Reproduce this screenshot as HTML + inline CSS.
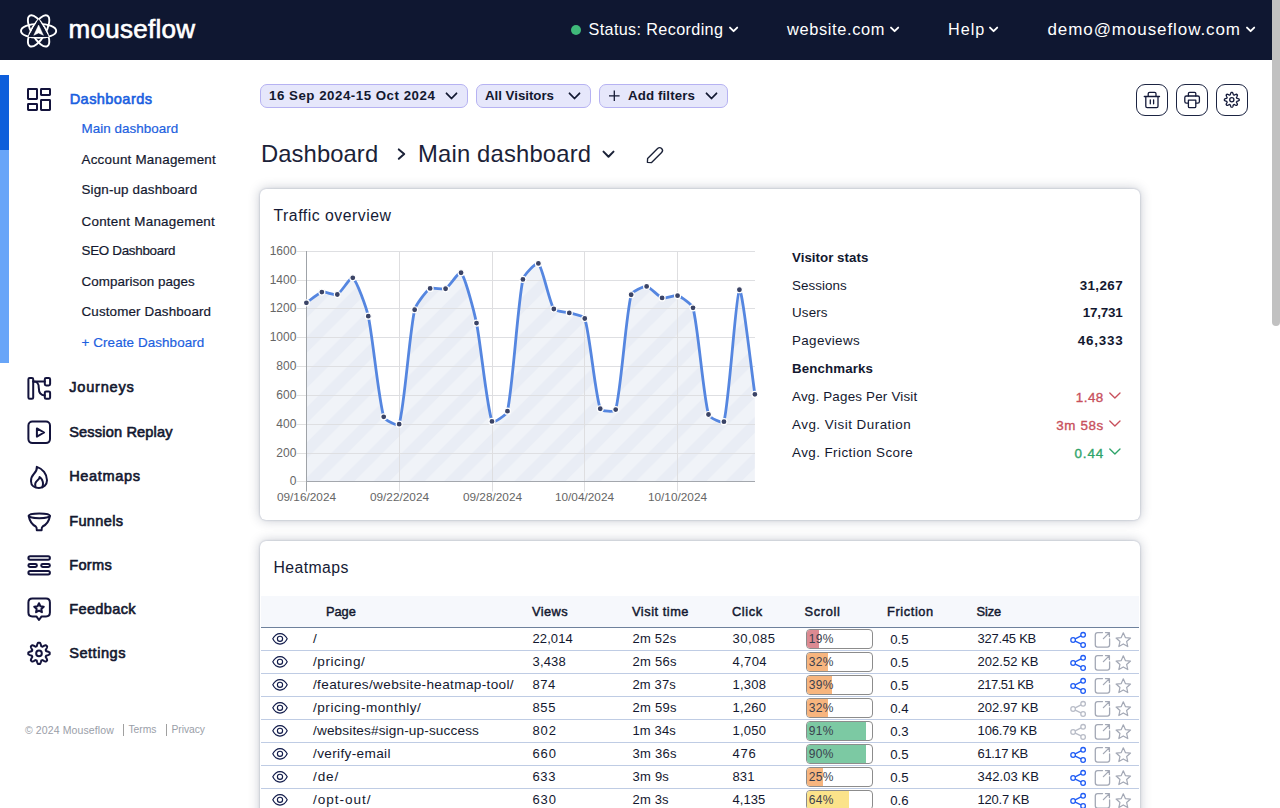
<!DOCTYPE html>
<html><head><meta charset="utf-8"><title>Mouseflow Dashboard</title>
<style>
html,body{margin:0;padding:0;width:1280px;height:808px;overflow:hidden;background:#fff;}
body{position:relative;font-family:"Liberation Sans", sans-serif;}
.t{position:absolute;white-space:nowrap;}
</style></head><body>
<div style="position:absolute;left:0px;top:0px;width:1272px;height:60px;background:#0f1731"></div>
<div style="position:absolute;left:1272px;top:0px;width:8px;height:326px;background:#c1c1c1;border-radius:0 0 4px 4px"></div>
<div style="position:absolute;left:1272px;top:326px;width:8px;height:482px;background:#ffffff"></div>
<div class="t" style="left:68.6px;top:15.62px;font-size:26px;line-height:26px;font-weight:400;color:#ffffff;letter-spacing:0.26px;-webkit-text-stroke:0.65px #fff">mouseflow</div>
<div style="position:absolute;left:571px;top:24.5px;width:10px;height:10px;background:#3fb97a;border-radius:50%"></div>
<div class="t" style="left:588.5px;top:21.45px;font-size:16.2px;line-height:16.2px;font-weight:400;color:#ffffff;letter-spacing:0.363px;">Status: Recording</div>
<div class="t" style="left:787px;top:21.29px;font-size:16.4px;line-height:16.4px;font-weight:400;color:#ffffff;letter-spacing:0.639px;">website.com</div>
<div class="t" style="left:948px;top:21.45px;font-size:16.2px;line-height:16.2px;font-weight:400;color:#ffffff;letter-spacing:0.992px;">Help</div>
<div class="t" style="left:1047.5px;top:20.79px;font-size:17px;line-height:17px;font-weight:400;color:#ffffff;letter-spacing:0.916px;">demo@mouseflow.com</div>
<div style="position:absolute;left:0px;top:75px;width:9px;height:75px;background:#0e5fdb"></div>
<div style="position:absolute;left:0px;top:150px;width:9px;height:213px;background:#68a5f8"></div>
<div class="t" style="left:69.7px;top:91.68px;font-size:14.6px;line-height:14.6px;font-weight:400;color:#1a5fe0;letter-spacing:0.397px;-webkit-text-stroke:0.6px #1a5fe0">Dashboards</div>
<div class="t" style="left:81.5px;top:122.38px;font-size:13.4px;line-height:13.4px;font-weight:400;color:#1d5fe0;letter-spacing:0.059px;-webkit-text-stroke:0.2px #1d5fe0">Main dashboard</div>
<div class="t" style="left:81.5px;top:152.78px;font-size:13.4px;line-height:13.4px;font-weight:400;color:#13182f;letter-spacing:0.232px;-webkit-text-stroke:0.2px #13182f">Account Management</div>
<div class="t" style="left:81.5px;top:183.18px;font-size:13.4px;line-height:13.4px;font-weight:400;color:#13182f;letter-spacing:0.152px;-webkit-text-stroke:0.2px #13182f">Sign-up dashboard</div>
<div class="t" style="left:81.5px;top:214.78px;font-size:13.4px;line-height:13.4px;font-weight:400;color:#13182f;letter-spacing:0.266px;-webkit-text-stroke:0.2px #13182f">Content Management</div>
<div class="t" style="left:81.5px;top:244.48px;font-size:13.4px;line-height:13.4px;font-weight:400;color:#13182f;letter-spacing:-0.293px;-webkit-text-stroke:0.2px #13182f">SEO Dashboard</div>
<div class="t" style="left:81.5px;top:275.18px;font-size:13.4px;line-height:13.4px;font-weight:400;color:#13182f;letter-spacing:0.053px;-webkit-text-stroke:0.2px #13182f">Comparison pages</div>
<div class="t" style="left:81.5px;top:305.48px;font-size:13.4px;line-height:13.4px;font-weight:400;color:#13182f;letter-spacing:0.131px;-webkit-text-stroke:0.2px #13182f">Customer Dashboard</div>
<div class="t" style="left:81.5px;top:336.38px;font-size:13.4px;line-height:13.4px;font-weight:400;color:#1d5fe0;letter-spacing:0.108px;-webkit-text-stroke:0.2px #1d5fe0">+ Create Dashboard</div>
<div class="t" style="left:69.2px;top:380.38px;font-size:14.6px;line-height:14.6px;font-weight:400;color:#13182f;letter-spacing:0.765px;-webkit-text-stroke:0.6px #13182f">Journeys</div>
<div class="t" style="left:69.2px;top:424.68px;font-size:14.6px;line-height:14.6px;font-weight:400;color:#13182f;letter-spacing:0.152px;-webkit-text-stroke:0.6px #13182f">Session Replay</div>
<div class="t" style="left:69.2px;top:468.88px;font-size:14.6px;line-height:14.6px;font-weight:400;color:#13182f;letter-spacing:0.623px;-webkit-text-stroke:0.6px #13182f">Heatmaps</div>
<div class="t" style="left:69.2px;top:513.68px;font-size:14.6px;line-height:14.6px;font-weight:400;color:#13182f;letter-spacing:0.326px;-webkit-text-stroke:0.6px #13182f">Funnels</div>
<div class="t" style="left:69.2px;top:557.78px;font-size:14.6px;line-height:14.6px;font-weight:400;color:#13182f;letter-spacing:0.304px;-webkit-text-stroke:0.6px #13182f">Forms</div>
<div class="t" style="left:69.2px;top:601.68px;font-size:14.6px;line-height:14.6px;font-weight:400;color:#13182f;letter-spacing:0.34px;-webkit-text-stroke:0.6px #13182f">Feedback</div>
<div class="t" style="left:69.2px;top:646.08px;font-size:14.6px;line-height:14.6px;font-weight:400;color:#13182f;letter-spacing:0.506px;-webkit-text-stroke:0.6px #13182f">Settings</div>
<div class="t" style="left:25px;top:725.28px;font-size:10.5px;line-height:10.5px;font-weight:400;color:#9a9ea8;letter-spacing:0.107px;">© 2024 Mouseflow</div>
<div style="position:absolute;left:123px;top:724px;width:1px;height:12px;background:#a0a0a0"></div>
<div class="t" style="left:128.5px;top:724.95px;font-size:10.3px;line-height:10.3px;font-weight:400;color:#9a9ea8;letter-spacing:-0.028px;">Terms</div>
<div style="position:absolute;left:166px;top:724px;width:1px;height:12px;background:#a0a0a0"></div>
<div class="t" style="left:171.5px;top:724.95px;font-size:10.3px;line-height:10.3px;font-weight:400;color:#9a9ea8;letter-spacing:-0.058px;">Privacy</div>
<div style="position:absolute;left:260px;top:84px;width:208px;height:24px;background:#e6e7fb;border:1px solid #b6b2f2;border-radius:7px;box-sizing:border-box"></div>
<div style="position:absolute;left:476px;top:84px;width:115px;height:24px;background:#e6e7fb;border:1px solid #b6b2f2;border-radius:7px;box-sizing:border-box"></div>
<div style="position:absolute;left:599px;top:84px;width:129px;height:24px;background:#e6e7fb;border:1px solid #b6b2f2;border-radius:7px;box-sizing:border-box"></div>
<div class="t" style="left:269px;top:88.76px;font-size:13.3px;line-height:13.3px;font-weight:700;color:#13182f;letter-spacing:0.514px;">16 Sep 2024-15 Oct 2024</div>
<div class="t" style="left:485px;top:88.76px;font-size:13.3px;line-height:13.3px;font-weight:700;color:#13182f;letter-spacing:-0.02px;">All Visitors</div>
<div class="t" style="left:628px;top:88.76px;font-size:13.3px;line-height:13.3px;font-weight:700;color:#13182f;letter-spacing:0.113px;">Add filters</div>
<div style="position:absolute;left:1136px;top:84px;width:32px;height:32px;border:1.5px solid #1c2442;border-radius:9px;box-sizing:border-box"></div>
<div style="position:absolute;left:1176px;top:84px;width:32px;height:32px;border:1.5px solid #1c2442;border-radius:9px;box-sizing:border-box"></div>
<div style="position:absolute;left:1216px;top:84px;width:32px;height:32px;border:1.5px solid #1c2442;border-radius:9px;box-sizing:border-box"></div>
<div class="t" style="left:261px;top:142.45px;font-size:23.8px;line-height:23.8px;font-weight:400;color:#1b2238;letter-spacing:0.088px;">Dashboard</div>
<div class="t" style="left:418px;top:142.45px;font-size:23.8px;line-height:23.8px;font-weight:400;color:#1b2238;letter-spacing:0.181px;">Main dashboard</div>
<div style="position:absolute;left:260px;top:189px;width:880px;height:331px;background:#fff;border-radius:6px;box-shadow:0 0 2px rgba(90,105,140,.45),0 0 12px rgba(30,40,70,.27)"></div>
<div style="position:absolute;left:260px;top:541px;width:880px;height:400px;background:#fff;border-radius:6px;box-shadow:0 0 2px rgba(90,105,140,.45),0 0 12px rgba(30,40,70,.27)"></div>
<div class="t" style="left:273.5px;top:207.99px;font-size:15.8px;line-height:15.8px;font-weight:400;color:#151a35;letter-spacing:0.514px;">Traffic overview</div>
<div class="t" style="left:273.5px;top:559.79px;font-size:15.8px;line-height:15.8px;font-weight:400;color:#151a35;letter-spacing:0.407px;">Heatmaps</div>
<div class="t" style="left:792px;top:250.56px;font-size:13.3px;line-height:13.3px;font-weight:700;color:#13182f;letter-spacing:0.035px;">Visitor stats</div>
<div class="t" style="left:792px;top:278.58px;font-size:13.4px;line-height:13.4px;font-weight:400;color:#13182f;letter-spacing:0.037px;">Sessions</div>
<div class="t" style="left:922.99px;width:200px;text-align:right;top:278.58px;font-size:13.4px;line-height:13.4px;font-weight:700;color:#13182f;letter-spacing:0.387px;">31,267</div>
<div class="t" style="left:792px;top:306.48px;font-size:13.4px;line-height:13.4px;font-weight:400;color:#13182f;letter-spacing:0.134px;">Users</div>
<div class="t" style="left:922.39px;width:200px;text-align:right;top:306.48px;font-size:13.4px;line-height:13.4px;font-weight:700;color:#13182f;letter-spacing:-0.213px;">17,731</div>
<div class="t" style="left:792px;top:334.38px;font-size:13.4px;line-height:13.4px;font-weight:400;color:#13182f;letter-spacing:0.355px;">Pageviews</div>
<div class="t" style="left:923.37px;width:200px;text-align:right;top:334.38px;font-size:13.4px;line-height:13.4px;font-weight:700;color:#13182f;letter-spacing:0.767px;">46,333</div>
<div class="t" style="left:792px;top:362.36px;font-size:13.3px;line-height:13.3px;font-weight:700;color:#13182f;letter-spacing:0.13px;">Benchmarks</div>
<div class="t" style="left:792px;top:390.38px;font-size:13.4px;line-height:13.4px;font-weight:400;color:#13182f;letter-spacing:0.191px;">Avg. Pages Per Visit</div>
<div class="t" style="left:903.78px;width:200px;text-align:right;top:391.18px;font-size:13.4px;line-height:13.4px;font-weight:400;color:#c8505c;letter-spacing:0.48px;-webkit-text-stroke:0.35px #c8505c">1.48</div>
<div class="t" style="left:792px;top:418.28px;font-size:13.4px;line-height:13.4px;font-weight:400;color:#13182f;letter-spacing:0.502px;">Avg. Visit Duration</div>
<div class="t" style="left:903.94px;width:200px;text-align:right;top:419.08px;font-size:13.4px;line-height:13.4px;font-weight:400;color:#c8505c;letter-spacing:0.636px;-webkit-text-stroke:0.35px #c8505c">3m 58s</div>
<div class="t" style="left:792px;top:446.18px;font-size:13.4px;line-height:13.4px;font-weight:400;color:#13182f;letter-spacing:0.441px;">Avg. Friction Score</div>
<div class="t" style="left:904.21px;width:200px;text-align:right;top:446.98px;font-size:13.4px;line-height:13.4px;font-weight:400;color:#2ea46a;letter-spacing:0.914px;-webkit-text-stroke:0.35px #2ea46a">0.44</div>
<div style="position:absolute;left:261px;top:596px;width:878px;height:31px;background:#f6f8fc"></div>
<div style="position:absolute;left:261px;top:626.5px;width:878px;height:1.6px;background:#6e819c"></div>
<div class="t" style="left:326px;top:606.18px;font-size:12.8px;line-height:12.8px;font-weight:400;color:#13182f;letter-spacing:-0.041px;-webkit-text-stroke:0.45px #13182f">Page</div>
<div class="t" style="left:532px;top:606.18px;font-size:12.8px;line-height:12.8px;font-weight:400;color:#13182f;letter-spacing:0.44px;-webkit-text-stroke:0.45px #13182f">Views</div>
<div class="t" style="left:632px;top:606.18px;font-size:12.8px;line-height:12.8px;font-weight:400;color:#13182f;letter-spacing:0.531px;-webkit-text-stroke:0.45px #13182f">Visit time</div>
<div class="t" style="left:732px;top:606.18px;font-size:12.8px;line-height:12.8px;font-weight:400;color:#13182f;letter-spacing:0.633px;-webkit-text-stroke:0.45px #13182f">Click</div>
<div class="t" style="left:804.6px;top:606.18px;font-size:12.8px;line-height:12.8px;font-weight:400;color:#13182f;letter-spacing:0.634px;-webkit-text-stroke:0.45px #13182f">Scroll</div>
<div class="t" style="left:887px;top:606.18px;font-size:12.8px;line-height:12.8px;font-weight:400;color:#13182f;letter-spacing:0.602px;-webkit-text-stroke:0.45px #13182f">Friction</div>
<div class="t" style="left:976.6px;top:606.18px;font-size:12.8px;line-height:12.8px;font-weight:400;color:#13182f;letter-spacing:-0.113px;-webkit-text-stroke:0.45px #13182f">Size</div>
<div style="position:absolute;left:261px;top:650.0px;width:878px;height:1px;background:#bfcce4"></div>
<div class="t" style="left:313px;top:632.21px;font-size:13.6px;line-height:13.6px;font-weight:400;color:#13182f;">/</div>
<div class="t" style="left:532.5px;top:631.91px;font-size:13px;line-height:13px;font-weight:400;color:#13182f;letter-spacing:0.083px;">22,014</div>
<div class="t" style="left:632.5px;top:631.91px;font-size:13px;line-height:13px;font-weight:400;color:#13182f;letter-spacing:0.228px;">2m 52s</div>
<div class="t" style="left:732.5px;top:631.91px;font-size:13px;line-height:13px;font-weight:400;color:#13182f;letter-spacing:0.543px;">30,085</div>
<div style="position:absolute;left:806px;top:629.3px;width:67px;height:19.5px;border:1px solid #8c8c8c;border-radius:4px;box-sizing:border-box;background:#fff"></div>
<div style="position:absolute;left:807px;top:630.3px;width:12.3px;height:17.5px;background:#dc8a92;border-radius:3px 0 0 3px"></div>
<div class="t" style="left:808.8px;top:633.04px;font-size:12px;line-height:12px;font-weight:400;color:#3a3f4e;letter-spacing:0.294px;">19%</div>
<div class="t" style="left:890.3px;top:632.74px;font-size:13.2px;line-height:13.2px;font-weight:400;color:#13182f;letter-spacing:-0.026px;">0.5</div>
<div class="t" style="left:977.6px;top:631.91px;font-size:13px;line-height:13px;font-weight:400;color:#13182f;letter-spacing:-0.255px;">327.45 KB</div>
<div style="position:absolute;left:261px;top:673.0px;width:878px;height:1px;background:#bfcce4"></div>
<div class="t" style="left:313px;top:655.21px;font-size:13.6px;line-height:13.6px;font-weight:400;color:#13182f;letter-spacing:0.526px;">/pricing/</div>
<div class="t" style="left:532.5px;top:654.91px;font-size:13px;line-height:13px;font-weight:400;color:#13182f;letter-spacing:0.183px;">3,438</div>
<div class="t" style="left:632.5px;top:654.91px;font-size:13px;line-height:13px;font-weight:400;color:#13182f;letter-spacing:0.288px;">2m 56s</div>
<div class="t" style="left:732.5px;top:654.91px;font-size:13px;line-height:13px;font-weight:400;color:#13182f;letter-spacing:0.358px;">4,704</div>
<div style="position:absolute;left:806px;top:652.3px;width:67px;height:19.5px;border:1px solid #8c8c8c;border-radius:4px;box-sizing:border-box;background:#fff"></div>
<div style="position:absolute;left:807px;top:653.3px;width:20.8px;height:17.5px;background:#f7b57e;border-radius:3px 0 0 3px"></div>
<div class="t" style="left:808.8px;top:656.04px;font-size:12px;line-height:12px;font-weight:400;color:#3a3f4e;letter-spacing:0.294px;">32%</div>
<div class="t" style="left:890.3px;top:655.74px;font-size:13.2px;line-height:13.2px;font-weight:400;color:#13182f;letter-spacing:-0.026px;">0.5</div>
<div class="t" style="left:977.6px;top:654.91px;font-size:13px;line-height:13px;font-weight:400;color:#13182f;letter-spacing:0.008px;">202.52 KB</div>
<div style="position:absolute;left:261px;top:696.0px;width:878px;height:1px;background:#bfcce4"></div>
<div class="t" style="left:313px;top:678.21px;font-size:13.6px;line-height:13.6px;font-weight:400;color:#13182f;letter-spacing:0.34px;">/features/website-heatmap-tool/</div>
<div class="t" style="left:532.5px;top:677.91px;font-size:13px;line-height:13px;font-weight:400;color:#13182f;letter-spacing:0.488px;">874</div>
<div class="t" style="left:632.5px;top:677.91px;font-size:13px;line-height:13px;font-weight:400;color:#13182f;letter-spacing:0.128px;">2m 37s</div>
<div class="t" style="left:732.5px;top:677.91px;font-size:13px;line-height:13px;font-weight:400;color:#13182f;letter-spacing:0.233px;">1,308</div>
<div style="position:absolute;left:806px;top:675.3px;width:67px;height:19.5px;border:1px solid #8c8c8c;border-radius:4px;box-sizing:border-box;background:#fff"></div>
<div style="position:absolute;left:807px;top:676.3px;width:25.4px;height:17.5px;background:#f7b57e;border-radius:3px 0 0 3px"></div>
<div class="t" style="left:808.8px;top:679.04px;font-size:12px;line-height:12px;font-weight:400;color:#3a3f4e;letter-spacing:0.294px;">39%</div>
<div class="t" style="left:890.3px;top:678.74px;font-size:13.2px;line-height:13.2px;font-weight:400;color:#13182f;letter-spacing:-0.026px;">0.5</div>
<div class="t" style="left:977.6px;top:677.91px;font-size:13px;line-height:13px;font-weight:400;color:#13182f;letter-spacing:-0.542px;">217.51 KB</div>
<div style="position:absolute;left:261px;top:719.0px;width:878px;height:1px;background:#bfcce4"></div>
<div class="t" style="left:313px;top:701.21px;font-size:13.6px;line-height:13.6px;font-weight:400;color:#13182f;letter-spacing:0.511px;">/pricing-monthly/</div>
<div class="t" style="left:532.5px;top:700.91px;font-size:13px;line-height:13px;font-weight:400;color:#13182f;letter-spacing:0.638px;">855</div>
<div class="t" style="left:632.5px;top:700.91px;font-size:13px;line-height:13px;font-weight:400;color:#13182f;letter-spacing:0.288px;">2m 59s</div>
<div class="t" style="left:732.5px;top:700.91px;font-size:13px;line-height:13px;font-weight:400;color:#13182f;letter-spacing:0.233px;">1,260</div>
<div style="position:absolute;left:806px;top:698.3px;width:67px;height:19.5px;border:1px solid #8c8c8c;border-radius:4px;box-sizing:border-box;background:#fff"></div>
<div style="position:absolute;left:807px;top:699.3px;width:20.8px;height:17.5px;background:#f7b57e;border-radius:3px 0 0 3px"></div>
<div class="t" style="left:808.8px;top:702.04px;font-size:12px;line-height:12px;font-weight:400;color:#3a3f4e;letter-spacing:0.294px;">32%</div>
<div class="t" style="left:890.3px;top:701.74px;font-size:13.2px;line-height:13.2px;font-weight:400;color:#13182f;letter-spacing:-0.026px;">0.4</div>
<div class="t" style="left:977.6px;top:700.91px;font-size:13px;line-height:13px;font-weight:400;color:#13182f;letter-spacing:0.008px;">202.97 KB</div>
<div style="position:absolute;left:261px;top:742.0px;width:878px;height:1px;background:#bfcce4"></div>
<div class="t" style="left:313px;top:724.21px;font-size:13.6px;line-height:13.6px;font-weight:400;color:#13182f;letter-spacing:0.144px;">/websites#sign-up-success</div>
<div class="t" style="left:532.5px;top:723.91px;font-size:13px;line-height:13px;font-weight:400;color:#13182f;letter-spacing:0.888px;">802</div>
<div class="t" style="left:632.5px;top:723.91px;font-size:13px;line-height:13px;font-weight:400;color:#13182f;letter-spacing:0.128px;">1m 34s</div>
<div class="t" style="left:732.5px;top:723.91px;font-size:13px;line-height:13px;font-weight:400;color:#13182f;letter-spacing:0.233px;">1,050</div>
<div style="position:absolute;left:806px;top:721.3px;width:67px;height:19.5px;border:1px solid #8c8c8c;border-radius:4px;box-sizing:border-box;background:#fff"></div>
<div style="position:absolute;left:807px;top:722.3px;width:59.1px;height:17.5px;background:#7cc9a3;border-radius:3px 0 0 3px"></div>
<div class="t" style="left:808.8px;top:725.04px;font-size:12px;line-height:12px;font-weight:400;color:#3a3f4e;letter-spacing:0.294px;">91%</div>
<div class="t" style="left:890.3px;top:724.74px;font-size:13.2px;line-height:13.2px;font-weight:400;color:#13182f;letter-spacing:-0.026px;">0.3</div>
<div class="t" style="left:977.6px;top:723.91px;font-size:13px;line-height:13px;font-weight:400;color:#13182f;letter-spacing:-0.155px;">106.79 KB</div>
<div style="position:absolute;left:261px;top:765.0px;width:878px;height:1px;background:#bfcce4"></div>
<div class="t" style="left:313px;top:747.21px;font-size:13.6px;line-height:13.6px;font-weight:400;color:#13182f;letter-spacing:0.354px;">/verify-email</div>
<div class="t" style="left:532.5px;top:746.91px;font-size:13px;line-height:13px;font-weight:400;color:#13182f;letter-spacing:0.888px;">660</div>
<div class="t" style="left:632.5px;top:746.91px;font-size:13px;line-height:13px;font-weight:400;color:#13182f;letter-spacing:0.288px;">3m 36s</div>
<div class="t" style="left:732.5px;top:746.91px;font-size:13px;line-height:13px;font-weight:400;color:#13182f;letter-spacing:0.738px;">476</div>
<div style="position:absolute;left:806px;top:744.3px;width:67px;height:19.5px;border:1px solid #8c8c8c;border-radius:4px;box-sizing:border-box;background:#fff"></div>
<div style="position:absolute;left:807px;top:745.3px;width:58.5px;height:17.5px;background:#7cc9a3;border-radius:3px 0 0 3px"></div>
<div class="t" style="left:808.8px;top:748.04px;font-size:12px;line-height:12px;font-weight:400;color:#3a3f4e;letter-spacing:0.294px;">90%</div>
<div class="t" style="left:890.3px;top:747.74px;font-size:13.2px;line-height:13.2px;font-weight:400;color:#13182f;letter-spacing:-0.026px;">0.5</div>
<div class="t" style="left:977.6px;top:746.91px;font-size:13px;line-height:13px;font-weight:400;color:#13182f;letter-spacing:-0.431px;">61.17 KB</div>
<div style="position:absolute;left:261px;top:788.0px;width:878px;height:1px;background:#bfcce4"></div>
<div class="t" style="left:313px;top:770.21px;font-size:13.6px;line-height:13.6px;font-weight:400;color:#13182f;letter-spacing:0.876px;">/de/</div>
<div class="t" style="left:532.5px;top:769.91px;font-size:13px;line-height:13px;font-weight:400;color:#13182f;letter-spacing:0.638px;">633</div>
<div class="t" style="left:632.5px;top:769.91px;font-size:13px;line-height:13px;font-weight:400;color:#13182f;letter-spacing:0.243px;">3m 9s</div>
<div class="t" style="left:732.5px;top:769.91px;font-size:13px;line-height:13px;font-weight:400;color:#13182f;letter-spacing:0.088px;">831</div>
<div style="position:absolute;left:806px;top:767.3px;width:67px;height:19.5px;border:1px solid #8c8c8c;border-radius:4px;box-sizing:border-box;background:#fff"></div>
<div style="position:absolute;left:807px;top:768.3px;width:16.2px;height:17.5px;background:#f7b57e;border-radius:3px 0 0 3px"></div>
<div class="t" style="left:808.8px;top:771.04px;font-size:12px;line-height:12px;font-weight:400;color:#3a3f4e;letter-spacing:0.294px;">25%</div>
<div class="t" style="left:890.3px;top:770.74px;font-size:13.2px;line-height:13.2px;font-weight:400;color:#13182f;letter-spacing:-0.026px;">0.5</div>
<div class="t" style="left:977.6px;top:769.91px;font-size:13px;line-height:13px;font-weight:400;color:#13182f;letter-spacing:0.07px;">342.03 KB</div>
<div class="t" style="left:313px;top:793.21px;font-size:13.6px;line-height:13.6px;font-weight:400;color:#13182f;letter-spacing:0.943px;">/opt-out/</div>
<div class="t" style="left:532.5px;top:792.91px;font-size:13px;line-height:13px;font-weight:400;color:#13182f;letter-spacing:0.888px;">630</div>
<div class="t" style="left:632.5px;top:792.91px;font-size:13px;line-height:13px;font-weight:400;color:#13182f;letter-spacing:0.168px;">2m 3s</div>
<div class="t" style="left:732.5px;top:792.91px;font-size:13px;line-height:13px;font-weight:400;color:#13182f;letter-spacing:0.058px;">4,135</div>
<div style="position:absolute;left:806px;top:790.3px;width:67px;height:19.5px;border:1px solid #8c8c8c;border-radius:4px;box-sizing:border-box;background:#fff"></div>
<div style="position:absolute;left:807px;top:791.3px;width:41.6px;height:17.5px;background:#fbe38a;border-radius:3px 0 0 3px"></div>
<div class="t" style="left:808.8px;top:794.04px;font-size:12px;line-height:12px;font-weight:400;color:#3a3f4e;letter-spacing:0.294px;">64%</div>
<div class="t" style="left:890.3px;top:793.74px;font-size:13.2px;line-height:13.2px;font-weight:400;color:#13182f;letter-spacing:-0.026px;">0.6</div>
<div class="t" style="left:977.6px;top:792.91px;font-size:13px;line-height:13px;font-weight:400;color:#13182f;letter-spacing:-0.246px;">120.7 KB</div>
<svg width="1280" height="808" viewBox="0 0 1280 808" style="position:absolute;left:0;top:0" font-family="Liberation Sans, sans-serif"><ellipse cx="38.6" cy="30.9" rx="17.6" ry="7.0" transform="rotate(0 38.6 30.9)" fill="none" stroke="#fff" stroke-width="1.9"/>
<ellipse cx="38.6" cy="30.9" rx="17.6" ry="7.0" transform="rotate(60 38.6 30.9)" fill="none" stroke="#fff" stroke-width="1.9"/>
<ellipse cx="38.6" cy="30.9" rx="17.6" ry="7.0" transform="rotate(120 38.6 30.9)" fill="none" stroke="#fff" stroke-width="1.9"/>
<path d="M38.60 19.80 L28.99 36.45 L48.21 36.45 Z" fill="#0f1731" stroke="#0f1731" stroke-width="1" stroke-linejoin="round"/>
<path d="M38.6 25.0 L43.4 35.3 L38.6 33.0 L33.8 35.3 Z" fill="#fff" stroke="#fff" stroke-width="0.5" stroke-linejoin="round"/>
<g fill="none" stroke="#13133c" stroke-width="2" stroke-linecap="round" stroke-linejoin="round" stroke-width="2" stroke-linejoin="miter"><rect x="28" y="89" width="9" height="10" rx="0.4"/><rect x="41" y="89" width="9" height="6" rx="0.4"/><rect x="28" y="104" width="9" height="6" rx="0.4"/><rect x="41" y="100" width="9" height="10" rx="0.4"/></g>
<g fill="none" stroke="#13133c" stroke-width="2" stroke-linecap="round" stroke-linejoin="round" stroke-width="1.95"><rect x="28.4" y="377.9" width="4.8" height="20.8" rx="1.3"/><rect x="44.8" y="377.9" width="5.3" height="7.5" rx="1.3"/><rect x="44.8" y="391.4" width="5.3" height="7.3" rx="1.3"/><path d="M33.2 381.5 H44.8"/><path d="M33.6 381.6 C37.5 381.8 38.8 383.5 38.8 388 C38.8 393 40.5 395.4 44.8 395.4"/></g>
<g fill="none" stroke="#13133c" stroke-width="2" stroke-linecap="round" stroke-linejoin="round" stroke-width="1.95"><rect x="28.4" y="421.6" width="21.6" height="21.5" rx="4"/><path d="M36.9 428.4 L44.1 432.5 L36.9 436.6 Z"/></g>
<g fill="none" stroke="#13133c" stroke-width="2" stroke-linecap="round" stroke-linejoin="round" stroke-width="1.95"><path d="M36.8 466.9 C37.2 470 35.8 472 33.8 474 C31.8 476 31 478.6 31 481.2 C31 485.6 34.6 488 39 488 C43.6 488 47 484.8 47 480.3 C47 474 42.6 468.8 36.8 466.9 Z"/><path d="M35.6 486.8 C34.6 484.2 35.6 481.8 37.6 480.2 C39 479.1 39.6 478.2 39.6 477 C41.8 478.6 43 481.2 43 484 C43 485.4 42.6 486.4 42.2 487.2"/></g>
<g fill="none" stroke="#13133c" stroke-width="2" stroke-linecap="round" stroke-linejoin="round" stroke-width="1.95"><ellipse cx="39.3" cy="515.8" rx="10.6" ry="2.4"/><path d="M28.7 516 C29.5 520.5 32 524.5 35.8 526.5 C36.6 527 36.8 528 36.8 530.2 L41.6 530.2 C41.6 528 41.8 527 42.6 526.5 C46.6 524.5 49.2 520.5 49.9 516"/></g>
<g fill="none" stroke="#13133c" stroke-width="2" stroke-linecap="round" stroke-linejoin="round" stroke-width="1.95"><rect x="28.4" y="556.3" width="21.5" height="3.5" rx="1.75"/><rect x="28.4" y="564.1" width="8.5" height="2.9" rx="1.45"/><rect x="41.2" y="564.1" width="8.7" height="2.9" rx="1.45"/><rect x="28.4" y="571" width="21.5" height="3.5" rx="1.75"/></g>
<g fill="none" stroke="#13133c" stroke-width="2" stroke-linecap="round" stroke-linejoin="round" stroke-width="1.95"><path d="M32.4 598.6 H46 Q49.9 598.6 49.9 602.5 V612.5 Q49.9 616.4 46 616.4 H41.6 L39 620 L36.4 616.4 H32.4 Q28.4 616.4 28.4 612.5 V602.5 Q28.4 598.6 32.4 598.6 Z"/><path d="M39.00,603.20 L40.41,606.26 L43.76,606.65 L41.28,608.94 L41.94,612.25 L39.00,610.60 L36.06,612.25 L36.72,608.94 L34.24,606.65 L37.59,606.26 Z"/></g>
<g fill="none" stroke="#13133c" stroke-width="2" stroke-linecap="round" stroke-linejoin="round" stroke-width="1.95"><path d="M39.00,642.70 L39.28,642.70 L39.56,642.71 L39.84,642.73 L40.09,643.02 L40.32,643.39 L40.52,643.80 L40.70,644.25 L40.85,644.70 L40.98,645.15 L41.10,645.58 L41.20,645.96 L41.32,646.27 L41.50,646.33 L41.69,646.40 L41.87,646.47 L42.05,646.55 L42.23,646.63 L42.40,646.72 L42.70,646.58 L43.05,646.39 L43.43,646.17 L43.84,645.94 L44.27,645.73 L44.71,645.54 L45.15,645.39 L45.57,645.29 L45.95,645.26 L46.16,645.45 L46.37,645.64 L46.57,645.83 L46.76,646.03 L46.95,646.24 L47.14,646.45 L47.11,646.83 L47.01,647.25 L46.86,647.69 L46.67,648.13 L46.46,648.56 L46.23,648.97 L46.01,649.35 L45.82,649.70 L45.68,650.00 L45.77,650.17 L45.85,650.35 L45.93,650.53 L46.00,650.71 L46.07,650.90 L46.13,651.08 L46.44,651.20 L46.82,651.30 L47.25,651.42 L47.70,651.55 L48.15,651.70 L48.60,651.88 L49.01,652.08 L49.38,652.31 L49.67,652.56 L49.69,652.84 L49.70,653.12 L49.70,653.40 L49.70,653.68 L49.69,653.96 L49.67,654.24 L49.38,654.49 L49.01,654.72 L48.60,654.92 L48.15,655.10 L47.70,655.25 L47.25,655.38 L46.82,655.50 L46.44,655.60 L46.13,655.72 L46.07,655.90 L46.00,656.09 L45.93,656.27 L45.85,656.45 L45.77,656.63 L45.68,656.80 L45.82,657.10 L46.01,657.45 L46.23,657.83 L46.46,658.24 L46.67,658.67 L46.86,659.11 L47.01,659.55 L47.11,659.97 L47.14,660.35 L46.95,660.56 L46.76,660.77 L46.57,660.97 L46.37,661.16 L46.16,661.35 L45.95,661.54 L45.57,661.51 L45.15,661.41 L44.71,661.26 L44.27,661.07 L43.84,660.86 L43.43,660.63 L43.05,660.41 L42.70,660.22 L42.40,660.08 L42.23,660.17 L42.05,660.25 L41.87,660.33 L41.69,660.40 L41.50,660.47 L41.32,660.53 L41.20,660.84 L41.10,661.22 L40.98,661.65 L40.85,662.10 L40.70,662.55 L40.52,663.00 L40.32,663.41 L40.09,663.78 L39.84,664.07 L39.56,664.09 L39.28,664.10 L39.00,664.10 L38.72,664.10 L38.44,664.09 L38.16,664.07 L37.91,663.78 L37.68,663.41 L37.48,663.00 L37.30,662.55 L37.15,662.10 L37.02,661.65 L36.90,661.22 L36.80,660.84 L36.68,660.53 L36.50,660.47 L36.31,660.40 L36.13,660.33 L35.95,660.25 L35.77,660.17 L35.60,660.08 L35.30,660.22 L34.95,660.41 L34.57,660.63 L34.16,660.86 L33.73,661.07 L33.29,661.26 L32.85,661.41 L32.43,661.51 L32.05,661.54 L31.84,661.35 L31.63,661.16 L31.43,660.97 L31.24,660.77 L31.05,660.56 L30.86,660.35 L30.89,659.97 L30.99,659.55 L31.14,659.11 L31.33,658.67 L31.54,658.24 L31.77,657.83 L31.99,657.45 L32.18,657.10 L32.32,656.80 L32.23,656.63 L32.15,656.45 L32.07,656.27 L32.00,656.09 L31.93,655.90 L31.87,655.72 L31.56,655.60 L31.18,655.50 L30.75,655.38 L30.30,655.25 L29.85,655.10 L29.40,654.92 L28.99,654.72 L28.62,654.49 L28.33,654.24 L28.31,653.96 L28.30,653.68 L28.30,653.40 L28.30,653.12 L28.31,652.84 L28.33,652.56 L28.62,652.31 L28.99,652.08 L29.40,651.88 L29.85,651.70 L30.30,651.55 L30.75,651.42 L31.18,651.30 L31.56,651.20 L31.87,651.08 L31.93,650.90 L32.00,650.71 L32.07,650.53 L32.15,650.35 L32.23,650.17 L32.32,650.00 L32.18,649.70 L31.99,649.35 L31.77,648.97 L31.54,648.56 L31.33,648.13 L31.14,647.69 L30.99,647.25 L30.89,646.83 L30.86,646.45 L31.05,646.24 L31.24,646.03 L31.43,645.83 L31.63,645.64 L31.84,645.45 L32.05,645.26 L32.43,645.29 L32.85,645.39 L33.29,645.54 L33.73,645.73 L34.16,645.94 L34.57,646.17 L34.95,646.39 L35.30,646.58 L35.60,646.72 L35.77,646.63 L35.95,646.55 L36.13,646.47 L36.31,646.40 L36.50,646.33 L36.68,646.27 L36.80,645.96 L36.90,645.58 L37.02,645.15 L37.15,644.70 L37.30,644.25 L37.48,643.80 L37.68,643.39 L37.91,643.02 L38.16,642.73 L38.44,642.71 L38.72,642.70 L39.00,642.70 Z"/><circle cx="39" cy="653.4" r="2.8"/></g>
<path d="M446.5 93.3 L451.5 98.5 L456.5 93.3" fill="none" stroke="#141a33" stroke-width="1.8" stroke-linecap="round" stroke-linejoin="round"/>
<path d="M569.5 93.3 L574.5 98.5 L579.5 93.3" fill="none" stroke="#141a33" stroke-width="1.8" stroke-linecap="round" stroke-linejoin="round"/>
<path d="M706.5 93.3 L711.5 98.5 L716.5 93.3" fill="none" stroke="#141a33" stroke-width="1.8" stroke-linecap="round" stroke-linejoin="round"/>
<path d="M614.3 90.5 V101 M609 95.8 H619.6" fill="none" stroke="#141a33" stroke-width="1.3"/>
<path d="M730 27.6 L733.6 31.2 L737.2 27.6" fill="none" stroke="#ffffff" stroke-width="1.9" stroke-linecap="round" stroke-linejoin="round"/>
<path d="M891 27.6 L894.6 31.2 L898.2 27.6" fill="none" stroke="#ffffff" stroke-width="1.9" stroke-linecap="round" stroke-linejoin="round"/>
<path d="M990 27.6 L993.6 31.2 L997.2 27.6" fill="none" stroke="#ffffff" stroke-width="1.9" stroke-linecap="round" stroke-linejoin="round"/>
<path d="M1247 27.6 L1250.6 31.2 L1254.2 27.6" fill="none" stroke="#ffffff" stroke-width="1.9" stroke-linecap="round" stroke-linejoin="round"/>
<path d="M398.8 149.4 L404.2 154.1 L398.8 158.8" fill="none" stroke="#1b2238" stroke-width="2" stroke-linecap="round" stroke-linejoin="round"/>
<path d="M603.5 151.6 L608.5 156.8 L613.5 151.6" fill="none" stroke="#1b2238" stroke-width="2" stroke-linecap="round" stroke-linejoin="round"/>
<path d="M647.4 162.3 L647.6 158.6 L657.6 148.6 Q659.6 146.6 661.6 148.6 Q663.6 150.6 661.6 152.6 L651.6 162.6 Z" fill="none" stroke="#1b2238" stroke-width="1.35" stroke-linejoin="round"/>
<g fill="none" stroke="#141a3a" stroke-width="1.3" stroke-linecap="round" stroke-linejoin="round"><path d="M1144.3 96.5 H1159.5"/><path d="M1148.2 96.3 V93.8 Q1148.2 92.4 1149.6 92.4 H1154.6 Q1156 92.4 1156 93.8 V96.3"/><path d="M1145.8 96.6 V106.2 Q1145.8 107.6 1147.2 107.6 H1156.6 Q1158 107.6 1158 106.2 V96.6"/><path d="M1150.3 99.8 V103.8 M1153.6 99.8 V103.8"/></g>
<g fill="none" stroke="#141a3a" stroke-width="1.3" stroke-linecap="round" stroke-linejoin="round"><path d="M1188.4 96 V93.6 Q1188.4 92.4 1189.6 92.4 H1194.6 Q1195.8 92.4 1195.8 93.6 V96"/><path d="M1188.2 103.2 H1186.4 Q1184.8 103.2 1184.8 101.6 V97.6 Q1184.8 96 1186.4 96 H1197.8 Q1199.4 96 1199.4 97.6 V101.6 Q1199.4 103.2 1197.8 103.2 H1196"/><path d="M1188.4 100.2 H1195.8 V106.4 Q1195.8 107.6 1194.6 107.6 H1189.6 Q1188.4 107.6 1188.4 106.4 Z"/></g>
<g fill="none" stroke="#141a3a" stroke-width="1.3" stroke-linecap="round" stroke-linejoin="round"><path d="M1231.80,92.40 L1231.99,92.40 L1232.19,92.41 L1232.38,92.42 L1232.55,92.62 L1232.71,92.87 L1232.85,93.16 L1232.97,93.46 L1233.08,93.78 L1233.17,94.09 L1233.25,94.38 L1233.33,94.64 L1233.41,94.85 L1233.54,94.90 L1233.66,94.95 L1233.79,95.00 L1233.92,95.05 L1234.04,95.11 L1234.16,95.17 L1234.37,95.07 L1234.61,94.94 L1234.87,94.79 L1235.15,94.64 L1235.45,94.49 L1235.75,94.36 L1236.05,94.26 L1236.34,94.19 L1236.61,94.17 L1236.75,94.30 L1236.89,94.43 L1237.03,94.57 L1237.17,94.71 L1237.30,94.85 L1237.43,94.99 L1237.41,95.26 L1237.34,95.55 L1237.24,95.85 L1237.11,96.15 L1236.96,96.45 L1236.81,96.73 L1236.66,96.99 L1236.53,97.23 L1236.43,97.44 L1236.49,97.56 L1236.55,97.68 L1236.60,97.81 L1236.65,97.94 L1236.70,98.06 L1236.75,98.19 L1236.96,98.27 L1237.22,98.35 L1237.51,98.43 L1237.82,98.52 L1238.14,98.63 L1238.44,98.75 L1238.73,98.89 L1238.98,99.05 L1239.18,99.22 L1239.19,99.41 L1239.20,99.61 L1239.20,99.80 L1239.20,99.99 L1239.19,100.19 L1239.18,100.38 L1238.98,100.55 L1238.73,100.71 L1238.44,100.85 L1238.14,100.97 L1237.82,101.08 L1237.51,101.17 L1237.22,101.25 L1236.96,101.33 L1236.75,101.41 L1236.70,101.54 L1236.65,101.66 L1236.60,101.79 L1236.55,101.92 L1236.49,102.04 L1236.43,102.16 L1236.53,102.37 L1236.66,102.61 L1236.81,102.87 L1236.96,103.15 L1237.11,103.45 L1237.24,103.75 L1237.34,104.05 L1237.41,104.34 L1237.43,104.61 L1237.30,104.75 L1237.17,104.89 L1237.03,105.03 L1236.89,105.17 L1236.75,105.30 L1236.61,105.43 L1236.34,105.41 L1236.05,105.34 L1235.75,105.24 L1235.45,105.11 L1235.15,104.96 L1234.87,104.81 L1234.61,104.66 L1234.37,104.53 L1234.16,104.43 L1234.04,104.49 L1233.92,104.55 L1233.79,104.60 L1233.66,104.65 L1233.54,104.70 L1233.41,104.75 L1233.33,104.96 L1233.25,105.22 L1233.17,105.51 L1233.08,105.82 L1232.97,106.14 L1232.85,106.44 L1232.71,106.73 L1232.55,106.98 L1232.38,107.18 L1232.19,107.19 L1231.99,107.20 L1231.80,107.20 L1231.61,107.20 L1231.41,107.19 L1231.22,107.18 L1231.05,106.98 L1230.89,106.73 L1230.75,106.44 L1230.63,106.14 L1230.52,105.82 L1230.43,105.51 L1230.35,105.22 L1230.27,104.96 L1230.19,104.75 L1230.06,104.70 L1229.94,104.65 L1229.81,104.60 L1229.68,104.55 L1229.56,104.49 L1229.44,104.43 L1229.23,104.53 L1228.99,104.66 L1228.73,104.81 L1228.45,104.96 L1228.15,105.11 L1227.85,105.24 L1227.55,105.34 L1227.26,105.41 L1226.99,105.43 L1226.85,105.30 L1226.71,105.17 L1226.57,105.03 L1226.43,104.89 L1226.30,104.75 L1226.17,104.61 L1226.19,104.34 L1226.26,104.05 L1226.36,103.75 L1226.49,103.45 L1226.64,103.15 L1226.79,102.87 L1226.94,102.61 L1227.07,102.37 L1227.17,102.16 L1227.11,102.04 L1227.05,101.92 L1227.00,101.79 L1226.95,101.66 L1226.90,101.54 L1226.85,101.41 L1226.64,101.33 L1226.38,101.25 L1226.09,101.17 L1225.78,101.08 L1225.46,100.97 L1225.16,100.85 L1224.87,100.71 L1224.62,100.55 L1224.42,100.38 L1224.41,100.19 L1224.40,99.99 L1224.40,99.80 L1224.40,99.61 L1224.41,99.41 L1224.42,99.22 L1224.62,99.05 L1224.87,98.89 L1225.16,98.75 L1225.46,98.63 L1225.78,98.52 L1226.09,98.43 L1226.38,98.35 L1226.64,98.27 L1226.85,98.19 L1226.90,98.06 L1226.95,97.94 L1227.00,97.81 L1227.05,97.68 L1227.11,97.56 L1227.17,97.44 L1227.07,97.23 L1226.94,96.99 L1226.79,96.73 L1226.64,96.45 L1226.49,96.15 L1226.36,95.85 L1226.26,95.55 L1226.19,95.26 L1226.17,94.99 L1226.30,94.85 L1226.43,94.71 L1226.57,94.57 L1226.71,94.43 L1226.85,94.30 L1226.99,94.17 L1227.26,94.19 L1227.55,94.26 L1227.85,94.36 L1228.15,94.49 L1228.45,94.64 L1228.73,94.79 L1228.99,94.94 L1229.23,95.07 L1229.44,95.17 L1229.56,95.11 L1229.68,95.05 L1229.81,95.00 L1229.94,94.95 L1230.06,94.90 L1230.19,94.85 L1230.27,94.64 L1230.35,94.38 L1230.43,94.09 L1230.52,93.78 L1230.63,93.46 L1230.75,93.16 L1230.89,92.87 L1231.05,92.62 L1231.22,92.42 L1231.41,92.41 L1231.61,92.40 L1231.80,92.40 Z"/><circle cx="1231.8" cy="99.8" r="2.1"/></g>
<defs><pattern id="hatch" patternUnits="userSpaceOnUse" x="0" y="0" width="35.2" height="35.2"><rect width="35.2" height="35.2" fill="#f0f3f8"/><path d="M10 0 L26 0 L0 26 L0 10 Z M10 35.2 L35.2 10 L35.2 26 L26 35.2 Z" fill="#e9edf5"/></pattern></defs>
<path d="M306.40 302.83 C309.49 300.67 318.49 292.95 321.86 292.04 C324.67 291.28 334.81 295.65 337.33 294.49 C340.99 292.80 350.60 276.25 352.79 277.79 C356.79 280.60 366.47 308.17 368.26 316.21 C372.66 335.97 378.43 398.32 383.72 416.80 C384.62 419.91 398.39 426.91 399.19 424.14 C404.58 405.49 409.62 331.84 414.65 309.74 C415.80 304.70 426.22 291.09 430.12 288.44 C432.41 286.89 443.05 290.02 445.58 288.73 C449.23 286.88 459.21 270.72 461.05 272.76 C465.40 277.59 474.37 312.83 476.51 323.12 C480.56 342.56 486.77 406.56 491.98 421.41 C492.95 424.17 506.69 414.67 507.44 411.19 C512.87 386.26 517.61 304.69 522.91 279.38 C523.80 275.14 536.42 261.53 538.38 263.40 C542.61 267.46 549.19 301.58 553.84 309.02 C555.38 311.48 566.26 311.97 569.30 312.91 C572.45 313.87 583.83 315.60 584.77 318.52 C590.01 334.76 594.94 393.16 600.23 408.74 C601.13 411.38 614.97 412.29 615.70 409.61 C621.16 389.50 625.79 316.17 631.16 294.77 C631.98 291.53 643.68 286.13 646.63 286.43 C649.87 286.76 658.68 296.92 662.10 297.94 C664.87 298.76 674.82 294.76 677.56 295.64 C681.01 296.74 692.07 304.19 693.02 307.87 C698.25 327.96 703.15 394.85 708.49 414.50 C709.34 417.61 723.25 424.53 723.95 421.69 C729.44 399.58 735.98 292.78 739.42 289.74 C742.16 287.31 751.79 373.43 754.88 394.35 L754.88 481.7 L306.40 481.7 Z" fill="url(#hatch)"/>
<path d="M306.5 251.5 H755" stroke="#dedfe2" stroke-width="1" fill="none"/>
<path d="M296.5 251.5 H306.5" stroke="#e0e0e0" stroke-width="1" fill="none"/>
<path d="M306.5 280.5 H755" stroke="#dedfe2" stroke-width="1" fill="none"/>
<path d="M296.5 280.5 H306.5" stroke="#e0e0e0" stroke-width="1" fill="none"/>
<path d="M306.5 308.5 H755" stroke="#dedfe2" stroke-width="1" fill="none"/>
<path d="M296.5 308.5 H306.5" stroke="#e0e0e0" stroke-width="1" fill="none"/>
<path d="M306.5 337.5 H755" stroke="#dedfe2" stroke-width="1" fill="none"/>
<path d="M296.5 337.5 H306.5" stroke="#e0e0e0" stroke-width="1" fill="none"/>
<path d="M306.5 366.5 H755" stroke="#dedfe2" stroke-width="1" fill="none"/>
<path d="M296.5 366.5 H306.5" stroke="#e0e0e0" stroke-width="1" fill="none"/>
<path d="M306.5 395.5 H755" stroke="#dedfe2" stroke-width="1" fill="none"/>
<path d="M296.5 395.5 H306.5" stroke="#e0e0e0" stroke-width="1" fill="none"/>
<path d="M306.5 424.5 H755" stroke="#dedfe2" stroke-width="1" fill="none"/>
<path d="M296.5 424.5 H306.5" stroke="#e0e0e0" stroke-width="1" fill="none"/>
<path d="M306.5 453.5 H755" stroke="#dedfe2" stroke-width="1" fill="none"/>
<path d="M296.5 453.5 H306.5" stroke="#e0e0e0" stroke-width="1" fill="none"/>
<path d="M296.5 481.5 H306.5" stroke="#e0e0e0" stroke-width="1" fill="none"/>
<path d="M399.5 251.5 V481 M399.5 482 V491.5" stroke="#dedee0" stroke-width="1" fill="none"/>
<path d="M492.5 251.5 V481 M492.5 482 V491.5" stroke="#dedee0" stroke-width="1" fill="none"/>
<path d="M584.5 251.5 V481 M584.5 482 V491.5" stroke="#dedee0" stroke-width="1" fill="none"/>
<path d="M677.5 251.5 V481 M677.5 482 V491.5" stroke="#dedee0" stroke-width="1" fill="none"/>
<path d="M306.5 251 V491.5" stroke="#9fa3a8" stroke-width="1" fill="none"/>
<path d="M306.5 481.5 H755" stroke="#a3a7ad" stroke-width="1" fill="none"/>
<path d="M306.40 302.83 C309.49 300.67 318.49 292.95 321.86 292.04 C324.67 291.28 334.81 295.65 337.33 294.49 C340.99 292.80 350.60 276.25 352.79 277.79 C356.79 280.60 366.47 308.17 368.26 316.21 C372.66 335.97 378.43 398.32 383.72 416.80 C384.62 419.91 398.39 426.91 399.19 424.14 C404.58 405.49 409.62 331.84 414.65 309.74 C415.80 304.70 426.22 291.09 430.12 288.44 C432.41 286.89 443.05 290.02 445.58 288.73 C449.23 286.88 459.21 270.72 461.05 272.76 C465.40 277.59 474.37 312.83 476.51 323.12 C480.56 342.56 486.77 406.56 491.98 421.41 C492.95 424.17 506.69 414.67 507.44 411.19 C512.87 386.26 517.61 304.69 522.91 279.38 C523.80 275.14 536.42 261.53 538.38 263.40 C542.61 267.46 549.19 301.58 553.84 309.02 C555.38 311.48 566.26 311.97 569.30 312.91 C572.45 313.87 583.83 315.60 584.77 318.52 C590.01 334.76 594.94 393.16 600.23 408.74 C601.13 411.38 614.97 412.29 615.70 409.61 C621.16 389.50 625.79 316.17 631.16 294.77 C631.98 291.53 643.68 286.13 646.63 286.43 C649.87 286.76 658.68 296.92 662.10 297.94 C664.87 298.76 674.82 294.76 677.56 295.64 C681.01 296.74 692.07 304.19 693.02 307.87 C698.25 327.96 703.15 394.85 708.49 414.50 C709.34 417.61 723.25 424.53 723.95 421.69 C729.44 399.58 735.98 292.78 739.42 289.74 C742.16 287.31 751.79 373.43 754.88 394.35" fill="none" stroke="#5586e0" stroke-width="2.8" stroke-linejoin="round" stroke-linecap="round"/>
<circle cx="306.40" cy="302.83" r="3.0" fill="#3b4466" stroke="#fff" stroke-width="1.2"/>
<circle cx="321.86" cy="292.04" r="3.0" fill="#3b4466" stroke="#fff" stroke-width="1.2"/>
<circle cx="337.33" cy="294.49" r="3.0" fill="#3b4466" stroke="#fff" stroke-width="1.2"/>
<circle cx="352.79" cy="277.79" r="3.0" fill="#3b4466" stroke="#fff" stroke-width="1.2"/>
<circle cx="368.26" cy="316.21" r="3.0" fill="#3b4466" stroke="#fff" stroke-width="1.2"/>
<circle cx="383.72" cy="416.80" r="3.0" fill="#3b4466" stroke="#fff" stroke-width="1.2"/>
<circle cx="399.19" cy="424.14" r="3.0" fill="#3b4466" stroke="#fff" stroke-width="1.2"/>
<circle cx="414.65" cy="309.74" r="3.0" fill="#3b4466" stroke="#fff" stroke-width="1.2"/>
<circle cx="430.12" cy="288.44" r="3.0" fill="#3b4466" stroke="#fff" stroke-width="1.2"/>
<circle cx="445.58" cy="288.73" r="3.0" fill="#3b4466" stroke="#fff" stroke-width="1.2"/>
<circle cx="461.05" cy="272.76" r="3.0" fill="#3b4466" stroke="#fff" stroke-width="1.2"/>
<circle cx="476.51" cy="323.12" r="3.0" fill="#3b4466" stroke="#fff" stroke-width="1.2"/>
<circle cx="491.98" cy="421.41" r="3.0" fill="#3b4466" stroke="#fff" stroke-width="1.2"/>
<circle cx="507.44" cy="411.19" r="3.0" fill="#3b4466" stroke="#fff" stroke-width="1.2"/>
<circle cx="522.91" cy="279.38" r="3.0" fill="#3b4466" stroke="#fff" stroke-width="1.2"/>
<circle cx="538.38" cy="263.40" r="3.0" fill="#3b4466" stroke="#fff" stroke-width="1.2"/>
<circle cx="553.84" cy="309.02" r="3.0" fill="#3b4466" stroke="#fff" stroke-width="1.2"/>
<circle cx="569.30" cy="312.91" r="3.0" fill="#3b4466" stroke="#fff" stroke-width="1.2"/>
<circle cx="584.77" cy="318.52" r="3.0" fill="#3b4466" stroke="#fff" stroke-width="1.2"/>
<circle cx="600.23" cy="408.74" r="3.0" fill="#3b4466" stroke="#fff" stroke-width="1.2"/>
<circle cx="615.70" cy="409.61" r="3.0" fill="#3b4466" stroke="#fff" stroke-width="1.2"/>
<circle cx="631.16" cy="294.77" r="3.0" fill="#3b4466" stroke="#fff" stroke-width="1.2"/>
<circle cx="646.63" cy="286.43" r="3.0" fill="#3b4466" stroke="#fff" stroke-width="1.2"/>
<circle cx="662.10" cy="297.94" r="3.0" fill="#3b4466" stroke="#fff" stroke-width="1.2"/>
<circle cx="677.56" cy="295.64" r="3.0" fill="#3b4466" stroke="#fff" stroke-width="1.2"/>
<circle cx="693.02" cy="307.87" r="3.0" fill="#3b4466" stroke="#fff" stroke-width="1.2"/>
<circle cx="708.49" cy="414.50" r="3.0" fill="#3b4466" stroke="#fff" stroke-width="1.2"/>
<circle cx="723.95" cy="421.69" r="3.0" fill="#3b4466" stroke="#fff" stroke-width="1.2"/>
<circle cx="739.42" cy="289.74" r="3.0" fill="#3b4466" stroke="#fff" stroke-width="1.2"/>
<circle cx="754.88" cy="394.35" r="3.0" fill="#3b4466" stroke="#fff" stroke-width="1.2"/>
<text x="296.4" y="484.50" text-anchor="end" font-size="12" fill="#666666">0</text>
<text x="296.4" y="456.50" text-anchor="end" font-size="12" fill="#666666">200</text>
<text x="296.4" y="427.50" text-anchor="end" font-size="12" fill="#666666">400</text>
<text x="296.4" y="398.50" text-anchor="end" font-size="12" fill="#666666">600</text>
<text x="296.4" y="369.50" text-anchor="end" font-size="12" fill="#666666">800</text>
<text x="296.4" y="340.50" text-anchor="end" font-size="12" fill="#666666">1000</text>
<text x="296.4" y="311.50" text-anchor="end" font-size="12" fill="#666666">1200</text>
<text x="296.4" y="283.50" text-anchor="end" font-size="12" fill="#666666">1400</text>
<text x="296.4" y="254.50" text-anchor="end" font-size="12" fill="#666666">1600</text>
<text x="306.50" y="500.9" text-anchor="middle" font-size="11.8" fill="#666666">09/16/2024</text>
<text x="399.50" y="500.9" text-anchor="middle" font-size="11.8" fill="#666666">09/22/2024</text>
<text x="492.50" y="500.9" text-anchor="middle" font-size="11.8" fill="#666666">09/28/2024</text>
<text x="584.50" y="500.9" text-anchor="middle" font-size="11.8" fill="#666666">10/04/2024</text>
<text x="677.50" y="500.9" text-anchor="middle" font-size="11.8" fill="#666666">10/10/2024</text>
<path d="M1109.8 393 L1114.9 398 L1120 393" fill="none" stroke="#c8505c" stroke-width="1.35" stroke-linecap="round" stroke-linejoin="round"/>
<path d="M1109.8 421 L1114.9 426 L1120 421" fill="none" stroke="#c8505c" stroke-width="1.35" stroke-linecap="round" stroke-linejoin="round"/>
<path d="M1109.8 449 L1114.9 454 L1120 449" fill="none" stroke="#2ea46a" stroke-width="1.35" stroke-linecap="round" stroke-linejoin="round"/>
<g fill="none" stroke="#101a4a" stroke-width="1.15"><path d="M272.8 638.80 C276.2 631.80 283.8 631.80 287.2 638.80 C283.8 645.80 276.2 645.80 272.8 638.80 Z"/><circle cx="280" cy="638.80" r="2.6"/></g>
<g fill="none" stroke="#1f5cf5" stroke-width="1.3"><circle cx="1073.1" cy="640.00" r="2.3"/><circle cx="1083.1" cy="634.80" r="2.3"/><circle cx="1083.1" cy="645.00" r="2.3"/><path d="M1075.2 638.90 L1081 635.90 M1075.2 641.10 L1081 643.90"/></g>
<g fill="none" stroke="#a3a8b5" stroke-width="1.3" stroke-linecap="round" stroke-linejoin="round"><path d="M1102.5 632.60 H1097.6 Q1095.3 632.60 1095.3 634.90 V644.80 Q1095.3 647.10 1097.6 647.10 H1107.3 Q1109.6 647.10 1109.6 644.80 V639.00"/><path d="M1103.4 638.60 L1109.4 632.60 M1105.5 632.60 H1109.4 V636.50"/></g>
<path d="M1123.30,632.80 L1125.36,637.57 L1130.53,638.05 L1126.63,641.48 L1127.77,646.55 L1123.30,643.90 L1118.83,646.55 L1119.97,641.48 L1116.07,638.05 L1121.24,637.57 Z" fill="none" stroke="#a3a8b5" stroke-width="1.2" stroke-linejoin="round"/>
<g fill="none" stroke="#101a4a" stroke-width="1.15"><path d="M272.8 661.80 C276.2 654.80 283.8 654.80 287.2 661.80 C283.8 668.80 276.2 668.80 272.8 661.80 Z"/><circle cx="280" cy="661.80" r="2.6"/></g>
<g fill="none" stroke="#1f5cf5" stroke-width="1.3"><circle cx="1073.1" cy="663.00" r="2.3"/><circle cx="1083.1" cy="657.80" r="2.3"/><circle cx="1083.1" cy="668.00" r="2.3"/><path d="M1075.2 661.90 L1081 658.90 M1075.2 664.10 L1081 666.90"/></g>
<g fill="none" stroke="#a3a8b5" stroke-width="1.3" stroke-linecap="round" stroke-linejoin="round"><path d="M1102.5 655.60 H1097.6 Q1095.3 655.60 1095.3 657.90 V667.80 Q1095.3 670.10 1097.6 670.10 H1107.3 Q1109.6 670.10 1109.6 667.80 V662.00"/><path d="M1103.4 661.60 L1109.4 655.60 M1105.5 655.60 H1109.4 V659.50"/></g>
<path d="M1123.30,655.80 L1125.36,660.57 L1130.53,661.05 L1126.63,664.48 L1127.77,669.55 L1123.30,666.90 L1118.83,669.55 L1119.97,664.48 L1116.07,661.05 L1121.24,660.57 Z" fill="none" stroke="#a3a8b5" stroke-width="1.2" stroke-linejoin="round"/>
<g fill="none" stroke="#101a4a" stroke-width="1.15"><path d="M272.8 684.80 C276.2 677.80 283.8 677.80 287.2 684.80 C283.8 691.80 276.2 691.80 272.8 684.80 Z"/><circle cx="280" cy="684.80" r="2.6"/></g>
<g fill="none" stroke="#1f5cf5" stroke-width="1.3"><circle cx="1073.1" cy="686.00" r="2.3"/><circle cx="1083.1" cy="680.80" r="2.3"/><circle cx="1083.1" cy="691.00" r="2.3"/><path d="M1075.2 684.90 L1081 681.90 M1075.2 687.10 L1081 689.90"/></g>
<g fill="none" stroke="#a3a8b5" stroke-width="1.3" stroke-linecap="round" stroke-linejoin="round"><path d="M1102.5 678.60 H1097.6 Q1095.3 678.60 1095.3 680.90 V690.80 Q1095.3 693.10 1097.6 693.10 H1107.3 Q1109.6 693.10 1109.6 690.80 V685.00"/><path d="M1103.4 684.60 L1109.4 678.60 M1105.5 678.60 H1109.4 V682.50"/></g>
<path d="M1123.30,678.80 L1125.36,683.57 L1130.53,684.05 L1126.63,687.48 L1127.77,692.55 L1123.30,689.90 L1118.83,692.55 L1119.97,687.48 L1116.07,684.05 L1121.24,683.57 Z" fill="none" stroke="#a3a8b5" stroke-width="1.2" stroke-linejoin="round"/>
<g fill="none" stroke="#101a4a" stroke-width="1.15"><path d="M272.8 707.80 C276.2 700.80 283.8 700.80 287.2 707.80 C283.8 714.80 276.2 714.80 272.8 707.80 Z"/><circle cx="280" cy="707.80" r="2.6"/></g>
<g fill="none" stroke="#b9bdc8" stroke-width="1.3"><circle cx="1073.1" cy="709.00" r="2.3"/><circle cx="1083.1" cy="703.80" r="2.3"/><circle cx="1083.1" cy="714.00" r="2.3"/><path d="M1075.2 707.90 L1081 704.90 M1075.2 710.10 L1081 712.90"/></g>
<g fill="none" stroke="#a3a8b5" stroke-width="1.3" stroke-linecap="round" stroke-linejoin="round"><path d="M1102.5 701.60 H1097.6 Q1095.3 701.60 1095.3 703.90 V713.80 Q1095.3 716.10 1097.6 716.10 H1107.3 Q1109.6 716.10 1109.6 713.80 V708.00"/><path d="M1103.4 707.60 L1109.4 701.60 M1105.5 701.60 H1109.4 V705.50"/></g>
<path d="M1123.30,701.80 L1125.36,706.57 L1130.53,707.05 L1126.63,710.48 L1127.77,715.55 L1123.30,712.90 L1118.83,715.55 L1119.97,710.48 L1116.07,707.05 L1121.24,706.57 Z" fill="none" stroke="#a3a8b5" stroke-width="1.2" stroke-linejoin="round"/>
<g fill="none" stroke="#101a4a" stroke-width="1.15"><path d="M272.8 730.80 C276.2 723.80 283.8 723.80 287.2 730.80 C283.8 737.80 276.2 737.80 272.8 730.80 Z"/><circle cx="280" cy="730.80" r="2.6"/></g>
<g fill="none" stroke="#b9bdc8" stroke-width="1.3"><circle cx="1073.1" cy="732.00" r="2.3"/><circle cx="1083.1" cy="726.80" r="2.3"/><circle cx="1083.1" cy="737.00" r="2.3"/><path d="M1075.2 730.90 L1081 727.90 M1075.2 733.10 L1081 735.90"/></g>
<g fill="none" stroke="#a3a8b5" stroke-width="1.3" stroke-linecap="round" stroke-linejoin="round"><path d="M1102.5 724.60 H1097.6 Q1095.3 724.60 1095.3 726.90 V736.80 Q1095.3 739.10 1097.6 739.10 H1107.3 Q1109.6 739.10 1109.6 736.80 V731.00"/><path d="M1103.4 730.60 L1109.4 724.60 M1105.5 724.60 H1109.4 V728.50"/></g>
<path d="M1123.30,724.80 L1125.36,729.57 L1130.53,730.05 L1126.63,733.48 L1127.77,738.55 L1123.30,735.90 L1118.83,738.55 L1119.97,733.48 L1116.07,730.05 L1121.24,729.57 Z" fill="none" stroke="#a3a8b5" stroke-width="1.2" stroke-linejoin="round"/>
<g fill="none" stroke="#101a4a" stroke-width="1.15"><path d="M272.8 753.80 C276.2 746.80 283.8 746.80 287.2 753.80 C283.8 760.80 276.2 760.80 272.8 753.80 Z"/><circle cx="280" cy="753.80" r="2.6"/></g>
<g fill="none" stroke="#1f5cf5" stroke-width="1.3"><circle cx="1073.1" cy="755.00" r="2.3"/><circle cx="1083.1" cy="749.80" r="2.3"/><circle cx="1083.1" cy="760.00" r="2.3"/><path d="M1075.2 753.90 L1081 750.90 M1075.2 756.10 L1081 758.90"/></g>
<g fill="none" stroke="#a3a8b5" stroke-width="1.3" stroke-linecap="round" stroke-linejoin="round"><path d="M1102.5 747.60 H1097.6 Q1095.3 747.60 1095.3 749.90 V759.80 Q1095.3 762.10 1097.6 762.10 H1107.3 Q1109.6 762.10 1109.6 759.80 V754.00"/><path d="M1103.4 753.60 L1109.4 747.60 M1105.5 747.60 H1109.4 V751.50"/></g>
<path d="M1123.30,747.80 L1125.36,752.57 L1130.53,753.05 L1126.63,756.48 L1127.77,761.55 L1123.30,758.90 L1118.83,761.55 L1119.97,756.48 L1116.07,753.05 L1121.24,752.57 Z" fill="none" stroke="#a3a8b5" stroke-width="1.2" stroke-linejoin="round"/>
<g fill="none" stroke="#101a4a" stroke-width="1.15"><path d="M272.8 776.80 C276.2 769.80 283.8 769.80 287.2 776.80 C283.8 783.80 276.2 783.80 272.8 776.80 Z"/><circle cx="280" cy="776.80" r="2.6"/></g>
<g fill="none" stroke="#1f5cf5" stroke-width="1.3"><circle cx="1073.1" cy="778.00" r="2.3"/><circle cx="1083.1" cy="772.80" r="2.3"/><circle cx="1083.1" cy="783.00" r="2.3"/><path d="M1075.2 776.90 L1081 773.90 M1075.2 779.10 L1081 781.90"/></g>
<g fill="none" stroke="#a3a8b5" stroke-width="1.3" stroke-linecap="round" stroke-linejoin="round"><path d="M1102.5 770.60 H1097.6 Q1095.3 770.60 1095.3 772.90 V782.80 Q1095.3 785.10 1097.6 785.10 H1107.3 Q1109.6 785.10 1109.6 782.80 V777.00"/><path d="M1103.4 776.60 L1109.4 770.60 M1105.5 770.60 H1109.4 V774.50"/></g>
<path d="M1123.30,770.80 L1125.36,775.57 L1130.53,776.05 L1126.63,779.48 L1127.77,784.55 L1123.30,781.90 L1118.83,784.55 L1119.97,779.48 L1116.07,776.05 L1121.24,775.57 Z" fill="none" stroke="#a3a8b5" stroke-width="1.2" stroke-linejoin="round"/>
<g fill="none" stroke="#101a4a" stroke-width="1.15"><path d="M272.8 799.80 C276.2 792.80 283.8 792.80 287.2 799.80 C283.8 806.80 276.2 806.80 272.8 799.80 Z"/><circle cx="280" cy="799.80" r="2.6"/></g>
<g fill="none" stroke="#1f5cf5" stroke-width="1.3"><circle cx="1073.1" cy="801.00" r="2.3"/><circle cx="1083.1" cy="795.80" r="2.3"/><circle cx="1083.1" cy="806.00" r="2.3"/><path d="M1075.2 799.90 L1081 796.90 M1075.2 802.10 L1081 804.90"/></g>
<g fill="none" stroke="#a3a8b5" stroke-width="1.3" stroke-linecap="round" stroke-linejoin="round"><path d="M1102.5 793.60 H1097.6 Q1095.3 793.60 1095.3 795.90 V805.80 Q1095.3 808.10 1097.6 808.10 H1107.3 Q1109.6 808.10 1109.6 805.80 V800.00"/><path d="M1103.4 799.60 L1109.4 793.60 M1105.5 793.60 H1109.4 V797.50"/></g>
<path d="M1123.30,793.80 L1125.36,798.57 L1130.53,799.05 L1126.63,802.48 L1127.77,807.55 L1123.30,804.90 L1118.83,807.55 L1119.97,802.48 L1116.07,799.05 L1121.24,798.57 Z" fill="none" stroke="#a3a8b5" stroke-width="1.2" stroke-linejoin="round"/></svg>
</body></html>
